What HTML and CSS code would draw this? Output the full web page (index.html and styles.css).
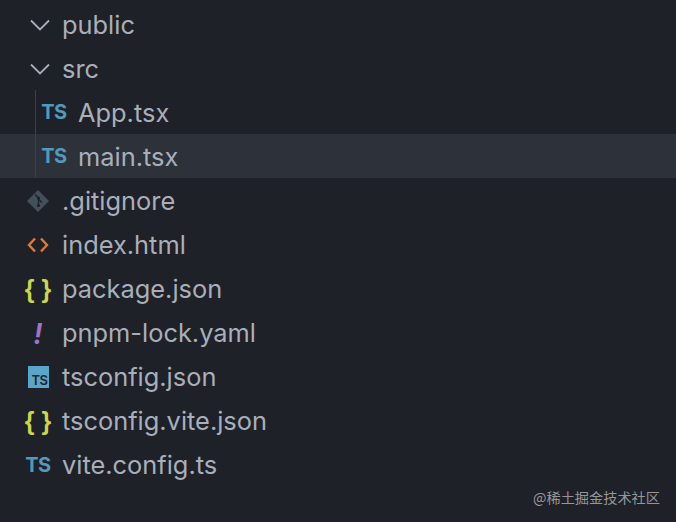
FILE: index.html
```html
<!DOCTYPE html>
<html lang="en">
<head>
<title>File explorer</title>
<link rel="stylesheet" href="styles.css">
</head>
<body>
<ul class="tree">
  <li class="row">
    <span class="icon"><svg class="chevron" width="20" height="12" viewBox="0 0 20 12"><path d="M1 1.5 L10 10.5 L19 1.5"/></svg></span>
    <span class="name">public</span>
  </li>
  <li class="row">
    <span class="icon"><svg class="chevron" width="20" height="12" viewBox="0 0 20 12"><path d="M1 1.5 L10 10.5 L19 1.5"/></svg></span>
    <span class="name">src</span>
  </li>
  <li>
    <ul class="nested">
      <li class="row">
        <span class="icon"><span class="ts">TS</span></span>
        <span class="name">App.tsx</span>
      </li>
      <li class="row active">
        <span class="icon"><span class="ts">TS</span></span>
        <span class="name">main.tsx</span>
      </li>
    </ul>
  </li>
  <li class="row">
    <span class="icon"><svg width="24" height="24" viewBox="0 0 24 24"><path class="git" d="M12 1 L23 12 L12 23 L1 12 Z"/><path class="git-line" d="M9 5.5 L12.5 9 L12.5 17 M12.5 10 L16 13.5"/><circle class="git-dot" cx="12.5" cy="9" r="1.6"/><circle class="git-dot" cx="12.5" cy="16.5" r="1.6"/></svg></span>
    <span class="name">.gitignore</span>
  </li>
  <li class="row">
    <span class="icon"><svg class="html" width="22" height="16" viewBox="0 0 22 16"><path d="M8 1.5 L2 8 L8 14.5 M14 1.5 L20 8 L14 14.5"/></svg></span>
    <span class="name">index.html</span>
  </li>
  <li class="row">
    <span class="icon"><span class="braces">{ }</span></span>
    <span class="name">package.json</span>
  </li>
  <li class="row">
    <span class="icon"><span class="yaml">!</span></span>
    <span class="name">pnpm-lock.yaml</span>
  </li>
  <li class="row">
    <span class="icon"><span class="tsconfig">TS</span></span>
    <span class="name">tsconfig.json</span>
  </li>
  <li class="row">
    <span class="icon"><span class="braces">{ }</span></span>
    <span class="name">tsconfig.vite.json</span>
  </li>
  <li class="row">
    <span class="icon"><span class="ts">TS</span></span>
    <span class="name">vite.config.ts</span>
  </li>
</ul>
<div class="watermark">@稀土掘金技术社区</div>
</body>
</html>
```

FILE: styles.css
```css
html, body {
  margin: 0;
  height: 100%;
}
body {
  position: relative;
  overflow: hidden;
  background-color: #1e2128;
  font-family: Inter, "Liberation Sans", sans-serif;
}
ul {
  margin: 0;
  padding: 0;
  list-style: none;
}
.tree {
  padding-top: 3px;
}
.row {
  display: flex;
  align-items: center;
  box-sizing: border-box;
  height: 44px;
  padding-left: 25px;
}
.icon {
  display: flex;
  align-items: center;
  justify-content: center;
  flex: none;
  width: 26px;
  margin-right: 11px;
}
.name {
  padding-bottom: 2px;
  color: #a9afba;
  font-size: 25.4px;
}
.nested {
  position: relative;
  margin-top: -1px;
  padding-top: 1px;
}
.nested:before {
  content: "";
  position: absolute;
  left: 35px;
  top: 0;
  bottom: 0;
  width: 1px;
  background-color: #3a3f48;
}
.nested .row {
  padding-left: 41px;
}
.nested .ts {
  padding-bottom: 3px;
}
.active {
  margin: -1px 0 1px;
  padding-top: 2px;
  background-color: #2c313a;
}
.chevron {
  margin-left: 3px;
}
.chevron path {
  fill: none;
  stroke: #a9afba;
  stroke-width: 1.8;
}
.ts {
  color: #519aba;
  font-size: 20px;
  font-weight: 700;
  letter-spacing: -0.5px;
}
.tsconfig {
  display: flex;
  align-items: flex-end;
  justify-content: flex-end;
  box-sizing: border-box;
  width: 21px;
  height: 22px;
  padding: 0 1px 0 0;
  background-color: #5aa5c8;
  color: #1e2128;
  font-size: 13px;
  font-weight: 600;
  line-height: 15px;
  letter-spacing: -0.5px;
}
.git {
  fill: #41505a;
}
.git-line {
  fill: none;
  stroke: #1e2128;
  stroke-width: 1.3;
}
.git-dot {
  fill: #1e2128;
}
.html path {
  fill: none;
  stroke: #e0793a;
  stroke-width: 2.4;
}
.braces {
  color: #cbd64a;
  font-family: "Liberation Sans", sans-serif;
  font-size: 25px;
  font-weight: 700;
  white-space: nowrap;
}
.yaml {
  color: #a074c4;
  font-size: 29px;
  font-weight: 600;
  font-style: italic;
}
.watermark {
  position: absolute;
  right: 16px;
  bottom: 15px;
  color: #94969a;
  font-family: "Noto Sans CJK SC", sans-serif;
  font-size: 14.2px;
  line-height: 20px;
}
```
